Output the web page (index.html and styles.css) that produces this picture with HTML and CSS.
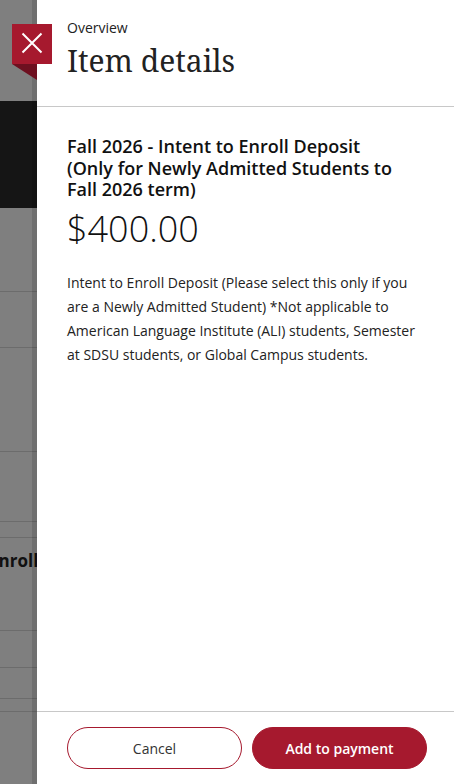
FILE: index.html
```html
<!DOCTYPE html>
<html lang="en">
<head>
<meta charset="utf-8">
<title>Item details</title>
<link rel="stylesheet" href="styles.css">
</head>
<body>
<div class="page">
  <div class="page-header"></div>
  <div class="page-banner"></div>
  <div class="page-row r1"></div>
  <div class="page-row r2"></div>
  <div class="page-row r3"></div>
  <div class="page-row r4"></div>
  <div class="page-row r5"></div>
  <div class="page-row r6"><span class="page-title">Enroll Deposit</span></div>
  <div class="page-row r7"></div>
  <div class="page-row r8"></div>
  <div class="page-row r9"></div>
</div>
<div class="overlay"></div>
<aside class="drawer">
  <header class="drawer-head">
    <div class="crumb">Overview</div>
    <h1 class="drawer-title">Item details</h1>
  </header>
  <main class="drawer-body">
    <h2 class="item-name">Fall 2026 - Intent to Enroll Deposit (Only for Newly Admitted Students to Fall 2026 term)</h2>
    <div class="item-price">$400.00</div>
    <p class="item-desc">Intent to Enroll Deposit (Please select this only if you are a Newly Admitted Student) *Not applicable to American Language Institute (ALI) students, Semester at SDSU students, or Global Campus students.</p>
  </main>
  <footer class="drawer-foot">
    <button class="btn btn-outline">Cancel</button>
    <button class="btn btn-fill">Add to payment</button>
  </footer>
</aside>
<button class="close-btn" aria-label="Close">
  <svg width="40" height="40" viewBox="0 0 40 40"><path d="M10.5 9.5 L29.5 28.5 M29.5 9.5 L10.5 28.5" stroke="#fff" stroke-width="2" fill="none"/></svg>
  <span class="fold"></span>
</button>
</body>
</html>
```
FILE: styles.css
```css
html, body {
  margin: 0;
  padding: 0;
}
body {
  width: 454px;
  height: 784px;
  overflow: hidden;
  position: relative;
  font-family: "Open Sans", "Liberation Sans", sans-serif;
  background: #fff;
}
.page {
  display: flex;
  flex-direction: column;
  width: 454px;
  height: 784px;
  background: #fff;
}
.page-header { height: 101px; flex: none; }
.page-banner { height: 107px; background: #2a2a2a; flex: none; }
.page-row { border-bottom: 1px solid #d8d8d8; box-sizing: border-box; flex: none; }
.r1 { height: 84px; }
.r2 { height: 56px; }
.r3 { height: 104px; }
.r4 { height: 70px; }
.r5 { height: 16px; }
.r6 { height: 93px; display: flex; align-items: flex-start; padding-top: 11px; }
.r7 { height: 37px; }
.r8 { height: 31px; }
.r9 { height: 13px; }
.page-title {
  font-weight: 700;
  font-size: 17px;
  line-height: 24px;
  color: #222;
  margin-left: -11px;
  white-space: nowrap;
}
.overlay {
  position: absolute;
  inset: 0;
  background: rgba(0, 0, 0, 0.5);
}
.drawer {
  position: absolute;
  top: 0;
  left: 37px;
  right: 0;
  bottom: 0;
  background: #fff;
  display: flex;
  flex-direction: column;
  box-shadow: -5px 0 0 rgba(0, 0, 0, 0.12);
}
.drawer-head {
  padding: 18px 30px 0;
  height: 88px;
  flex: none;
  border-bottom: 1px solid #c8c8c8;
}
.crumb {
  font-size: 14px;
  color: #222;
  line-height: 20px;
}
.drawer-title {
  margin: 0;
  font-family: "Noto Serif", "DejaVu Serif", "Liberation Serif", serif;
  font-weight: 400;
  font-size: 30px;
  line-height: 34px;
  color: #222;
  margin-top: 6px;
}
.drawer-body {
  flex: 1;
  padding: 29px 30px 0;
}
.item-name {
  margin: 0;
  padding-right: 14px;
  font-size: 18px;
  font-weight: 600;
  line-height: 21.5px;
  color: #111;
}
.item-price {
  font-size: 36px;
  font-weight: 300;
  color: #111;
  line-height: 40px;
  margin-top: 8px;
}
.item-desc {
  margin: 22px 0 0;
  font-size: 14px;
  line-height: 24px;
  color: #222;
}
.drawer-foot {
  border-top: 1px solid #c8c8c8;
  padding: 15px 27px 15px 30px;
  display: flex;
  gap: 10px;
  flex: none;
}
.btn {
  flex: 1;
  height: 42px;
  border-radius: 21px;
  font-family: "Open Sans", "Liberation Sans", sans-serif;
  font-size: 14px;
  cursor: pointer;
}
.btn-outline {
  background: #fff;
  border: 1px solid #a6192e;
  color: #333;
}
.btn-fill {
  background: #a6192e;
  border: 1px solid #a6192e;
  color: #fff;
  font-weight: 600;
}
.close-btn {
  position: absolute;
  top: 24px;
  left: 12px;
  width: 40px;
  height: 40px;
  padding: 0;
  border: 0;
  background: #a6192e;
  cursor: pointer;
}
.close-btn svg { display: block; }
.fold {
  position: absolute;
  top: 40px;
  left: 0;
  width: 0;
  height: 0;
  border-top: 16px solid #6e1020;
  border-left: 25px solid transparent;
}
```
